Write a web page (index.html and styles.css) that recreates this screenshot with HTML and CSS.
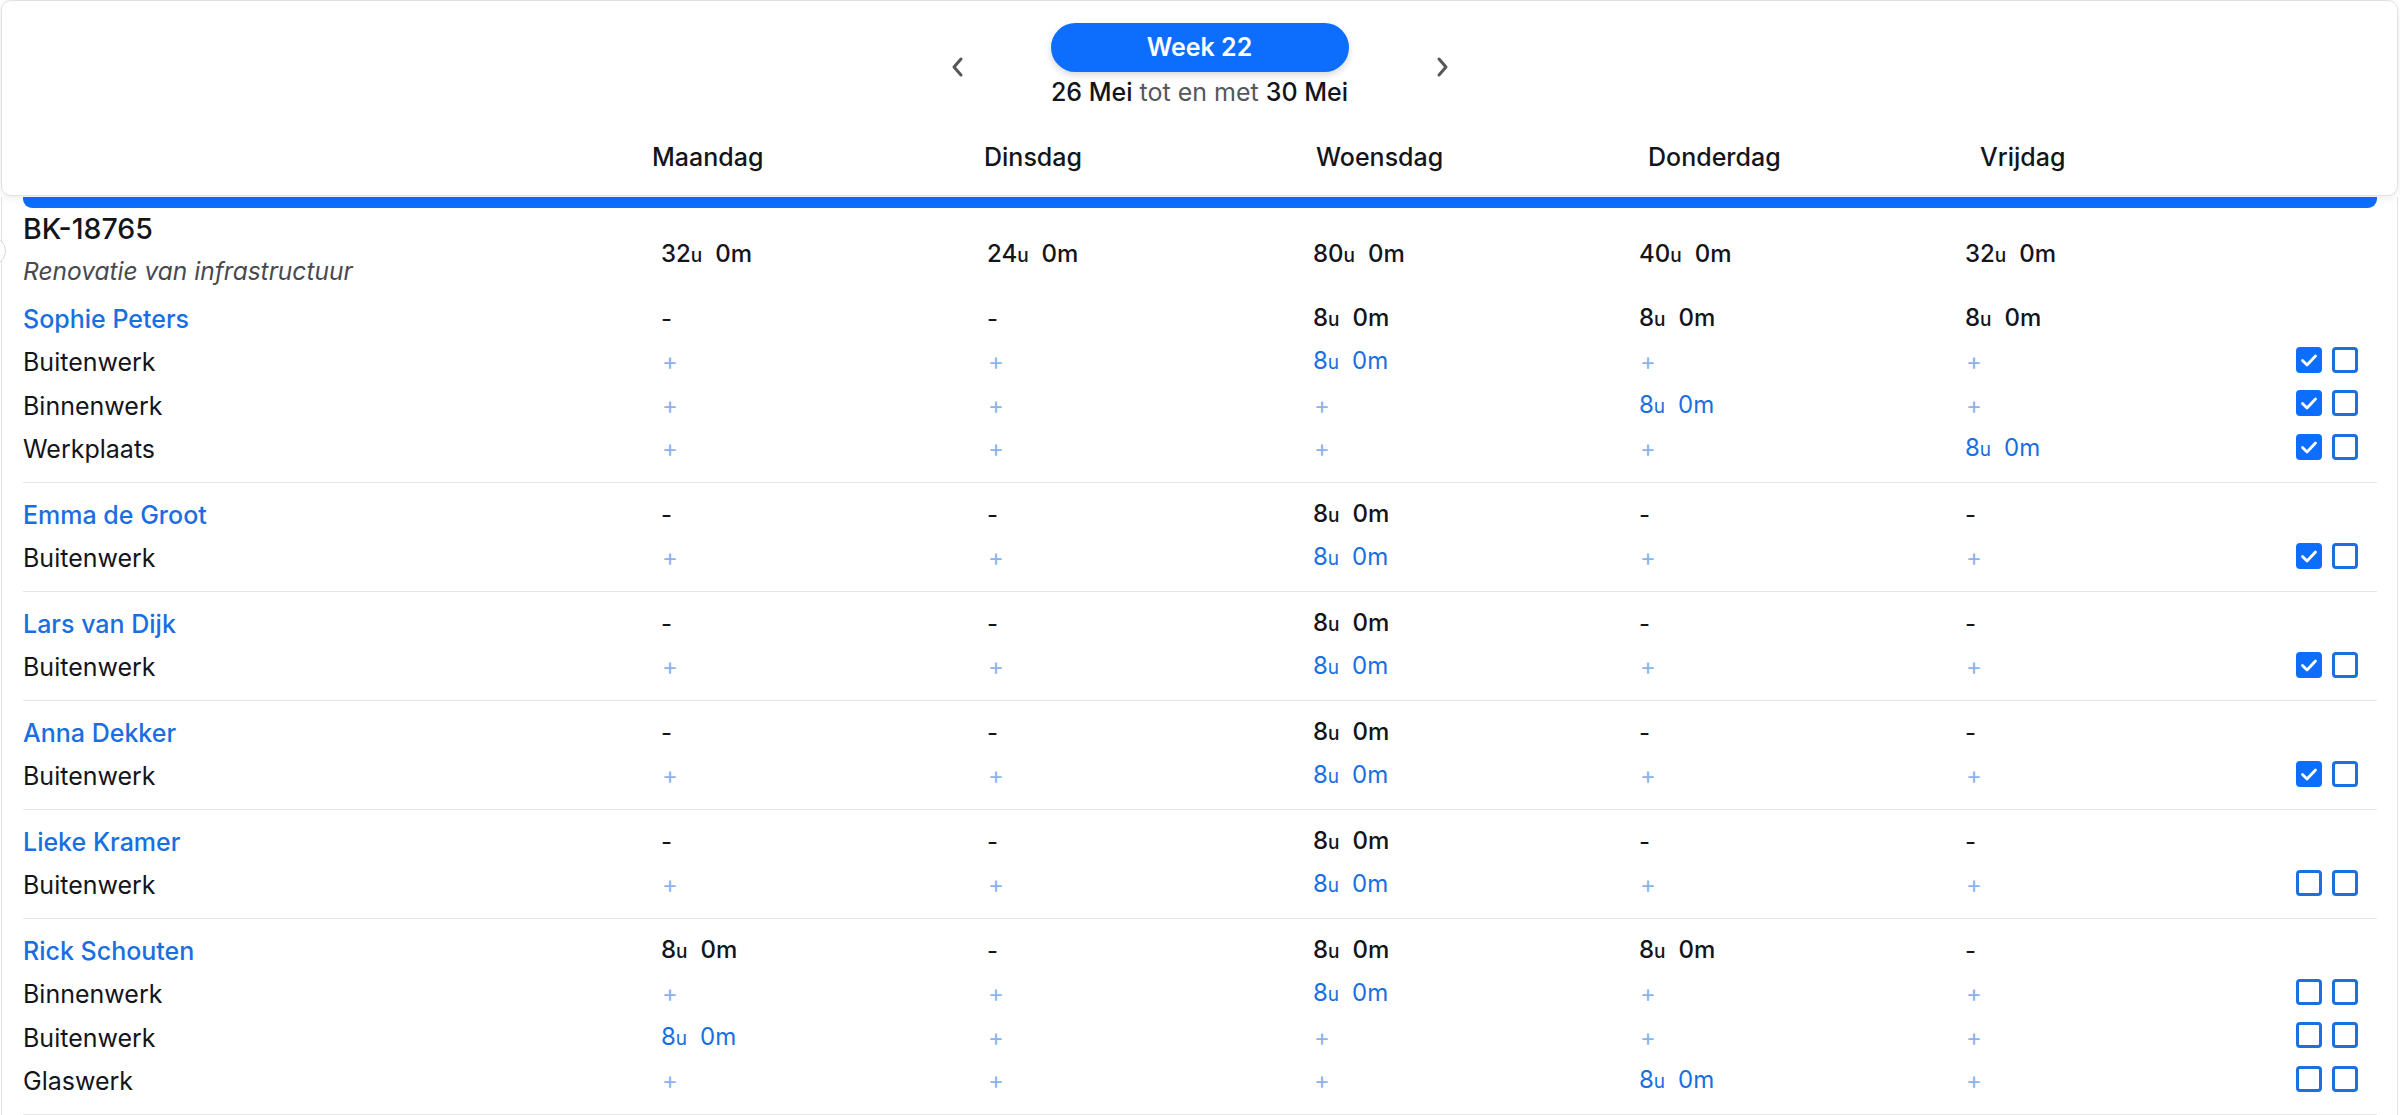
FILE: index.html
```html
<!DOCTYPE html>
<html lang="nl">
<head>
<meta charset="utf-8">
<title>Week 22</title>
<link rel="stylesheet" href="styles.css">
</head>
<body>
<header class="topbar">
  <div class="nav">
    <span class="chev"><svg viewBox="0 0 14 22" width="14" height="22"><path d="M11 3 L4 11 L11 19" /></svg></span>
    <div class="week">
      <div class="pill">Week 22</div>
      <div class="range"><b>26 Mei</b> tot en met <b>30 Mei</b></div>
    </div>
    <span class="chev"><svg viewBox="0 0 14 22" width="14" height="22"><path d="M3 3 L10 11 L3 19" /></svg></span>
  </div>
  <div class="days">
    <span>Maandag</span><span>Dinsdag</span><span>Woensdag</span><span>Donderdag</span><span>Vrijdag</span>
  </div>
</header>

<main class="panel">
  <span class="edge-knob"></span>
  <div class="bar"></div>

  <section class="grid project-head">
    <div class="title-cell">
      <div class="title">BK-18765</div>
      <div class="subtitle">Renovatie van infrastructuur</div>
    </div>
    <div class="val strong"><span class="n">32</span><span class="u">u</span><span class="n gap">0</span><span class="m">m</span></div>
    <div class="val strong"><span class="n">24</span><span class="u">u</span><span class="n gap">0</span><span class="m">m</span></div>
    <div class="val strong"><span class="n">80</span><span class="u">u</span><span class="n gap">0</span><span class="m">m</span></div>
    <div class="val strong"><span class="n">40</span><span class="u">u</span><span class="n gap">0</span><span class="m">m</span></div>
    <div class="val strong"><span class="n">32</span><span class="u">u</span><span class="n gap">0</span><span class="m">m</span></div>
    <div></div>
  </section>

  <!-- Sophie Peters -->
  <section class="group first">
    <div class="grid row">
      <div class="name">Sophie Peters</div>
      <div class="val">-</div><div class="val">-</div>
      <div class="val strong"><span class="n">8</span><span class="u">u</span><span class="n gap">0</span><span class="m">m</span></div>
      <div class="val strong"><span class="n">8</span><span class="u">u</span><span class="n gap">0</span><span class="m">m</span></div>
      <div class="val strong"><span class="n">8</span><span class="u">u</span><span class="n gap">0</span><span class="m">m</span></div>
      <div></div>
    </div>
    <div class="grid row">
      <div class="task">Buitenwerk</div>
      <div class="add">+</div><div class="add">+</div>
      <div class="val blue"><span class="n">8</span><span class="u">u</span><span class="n gap">0</span><span class="m">m</span></div>
      <div class="add">+</div><div class="add">+</div>
      <div class="checks"><span class="cb on"><svg viewBox="0 0 26 26"><path d="M6.5 13.5 L11 18 L19.5 9"/></svg></span><span class="cb"></span></div>
    </div>
    <div class="grid row">
      <div class="task">Binnenwerk</div>
      <div class="add">+</div><div class="add">+</div><div class="add">+</div>
      <div class="val blue"><span class="n">8</span><span class="u">u</span><span class="n gap">0</span><span class="m">m</span></div>
      <div class="add">+</div>
      <div class="checks"><span class="cb on"><svg viewBox="0 0 26 26"><path d="M6.5 13.5 L11 18 L19.5 9"/></svg></span><span class="cb"></span></div>
    </div>
    <div class="grid row">
      <div class="task">Werkplaats</div>
      <div class="add">+</div><div class="add">+</div><div class="add">+</div><div class="add">+</div>
      <div class="val blue"><span class="n">8</span><span class="u">u</span><span class="n gap">0</span><span class="m">m</span></div>
      <div class="checks"><span class="cb on"><svg viewBox="0 0 26 26"><path d="M6.5 13.5 L11 18 L19.5 9"/></svg></span><span class="cb"></span></div>
    </div>
  </section>

  <!-- Emma de Groot -->
  <section class="group">
    <div class="grid row">
      <div class="name">Emma de Groot</div>
      <div class="val">-</div><div class="val">-</div>
      <div class="val strong"><span class="n">8</span><span class="u">u</span><span class="n gap">0</span><span class="m">m</span></div>
      <div class="val">-</div><div class="val">-</div>
      <div></div>
    </div>
    <div class="grid row">
      <div class="task">Buitenwerk</div>
      <div class="add">+</div><div class="add">+</div>
      <div class="val blue"><span class="n">8</span><span class="u">u</span><span class="n gap">0</span><span class="m">m</span></div>
      <div class="add">+</div><div class="add">+</div>
      <div class="checks"><span class="cb on"><svg viewBox="0 0 26 26"><path d="M6.5 13.5 L11 18 L19.5 9"/></svg></span><span class="cb"></span></div>
    </div>
  </section>

  <!-- Lars van Dijk -->
  <section class="group">
    <div class="grid row">
      <div class="name">Lars van Dijk</div>
      <div class="val">-</div><div class="val">-</div>
      <div class="val strong"><span class="n">8</span><span class="u">u</span><span class="n gap">0</span><span class="m">m</span></div>
      <div class="val">-</div><div class="val">-</div>
      <div></div>
    </div>
    <div class="grid row">
      <div class="task">Buitenwerk</div>
      <div class="add">+</div><div class="add">+</div>
      <div class="val blue"><span class="n">8</span><span class="u">u</span><span class="n gap">0</span><span class="m">m</span></div>
      <div class="add">+</div><div class="add">+</div>
      <div class="checks"><span class="cb on"><svg viewBox="0 0 26 26"><path d="M6.5 13.5 L11 18 L19.5 9"/></svg></span><span class="cb"></span></div>
    </div>
  </section>

  <!-- Anna Dekker -->
  <section class="group">
    <div class="grid row">
      <div class="name">Anna Dekker</div>
      <div class="val">-</div><div class="val">-</div>
      <div class="val strong"><span class="n">8</span><span class="u">u</span><span class="n gap">0</span><span class="m">m</span></div>
      <div class="val">-</div><div class="val">-</div>
      <div></div>
    </div>
    <div class="grid row">
      <div class="task">Buitenwerk</div>
      <div class="add">+</div><div class="add">+</div>
      <div class="val blue"><span class="n">8</span><span class="u">u</span><span class="n gap">0</span><span class="m">m</span></div>
      <div class="add">+</div><div class="add">+</div>
      <div class="checks"><span class="cb on"><svg viewBox="0 0 26 26"><path d="M6.5 13.5 L11 18 L19.5 9"/></svg></span><span class="cb"></span></div>
    </div>
  </section>

  <!-- Lieke Kramer -->
  <section class="group">
    <div class="grid row">
      <div class="name">Lieke Kramer</div>
      <div class="val">-</div><div class="val">-</div>
      <div class="val strong"><span class="n">8</span><span class="u">u</span><span class="n gap">0</span><span class="m">m</span></div>
      <div class="val">-</div><div class="val">-</div>
      <div></div>
    </div>
    <div class="grid row">
      <div class="task">Buitenwerk</div>
      <div class="add">+</div><div class="add">+</div>
      <div class="val blue"><span class="n">8</span><span class="u">u</span><span class="n gap">0</span><span class="m">m</span></div>
      <div class="add">+</div><div class="add">+</div>
      <div class="checks"><span class="cb"></span><span class="cb"></span></div>
    </div>
  </section>

  <!-- Rick Schouten -->
  <section class="group">
    <div class="grid row">
      <div class="name">Rick Schouten</div>
      <div class="val strong"><span class="n">8</span><span class="u">u</span><span class="n gap">0</span><span class="m">m</span></div>
      <div class="val">-</div>
      <div class="val strong"><span class="n">8</span><span class="u">u</span><span class="n gap">0</span><span class="m">m</span></div>
      <div class="val strong"><span class="n">8</span><span class="u">u</span><span class="n gap">0</span><span class="m">m</span></div>
      <div class="val">-</div>
      <div></div>
    </div>
    <div class="grid row">
      <div class="task">Binnenwerk</div>
      <div class="add">+</div><div class="add">+</div>
      <div class="val blue"><span class="n">8</span><span class="u">u</span><span class="n gap">0</span><span class="m">m</span></div>
      <div class="add">+</div><div class="add">+</div>
      <div class="checks"><span class="cb"></span><span class="cb"></span></div>
    </div>
    <div class="grid row">
      <div class="task">Buitenwerk</div>
      <div class="val blue"><span class="n">8</span><span class="u">u</span><span class="n gap">0</span><span class="m">m</span></div>
      <div class="add">+</div><div class="add">+</div><div class="add">+</div><div class="add">+</div>
      <div class="checks"><span class="cb"></span><span class="cb"></span></div>
    </div>
    <div class="grid row">
      <div class="task">Glaswerk</div>
      <div class="add">+</div><div class="add">+</div><div class="add">+</div>
      <div class="val blue"><span class="n">8</span><span class="u">u</span><span class="n gap">0</span><span class="m">m</span></div>
      <div class="add">+</div>
      <div class="checks"><span class="cb"></span><span class="cb"></span></div>
    </div>
  </section>
</main>
</body>
</html>
```

FILE: styles.css
```css
* { box-sizing: border-box; }

html, body {
  margin: 0;
  padding: 0;
  background: #ffffff;
}

body {
  font-family: Inter, "Noto Sans", "Liberation Sans", sans-serif;
  font-size: 25px;
  line-height: 30px;
  color: #14151a;
  overflow: hidden;
  height: 1115px;
}

/* ---------- top bar ---------- */
.topbar {
  position: relative;
  z-index: 2;
  margin: 0 2px 0 1px;
  background: #fff;
  border: 1px solid #e1e1e1;
  border-radius: 10px;
  box-shadow: 0 2px 8px rgba(0, 0, 0, 0.08);
  padding: 22px 0 23px;
}

.nav {
  display: flex;
  justify-content: center;
  align-items: center;
  gap: 87px;
}

.chev {
  display: flex;
  width: 14px;
  height: 22px;
  margin-top: 4px;
}
.chev svg path {
  fill: none;
  stroke: #55565b;
  stroke-width: 3;
  stroke-linecap: round;
  stroke-linejoin: round;
}

.week {
  width: 298px;
  display: flex;
  flex-direction: column;
  align-items: center;
}

.pill {
  width: 298px;
  height: 49px;
  border-radius: 25px;
  background: #0d6efd;
  color: #fff;
  font-weight: 600;
  text-align: center;
  line-height: 49px;
  box-shadow: 0 3px 7px rgba(0, 0, 0, 0.16);
}

.range {
  margin-top: 5px;
  color: #55575e;
  white-space: nowrap;
}
.range b {
  font-weight: 500;
  color: #14151a;
}

.days {
  margin-top: 35px;
  padding-left: 650px;
  display: grid;
  grid-template-columns: repeat(5, 332px);
  font-weight: 500;
}

/* ---------- panel ---------- */
.panel {
  position: relative;
  margin: 0 2px 0 1px;
  border-left: 1px solid #e3e3e3;
  border-right: 1px solid #e3e3e3;
  padding: 0 20px 0 21px;
}

.edge-knob {
  position: absolute;
  left: -26px;
  top: 39px;
  width: 30px;
  height: 30px;
  border-radius: 50%;
  border: 1px solid #d6d6d6;
  background: #fff;
}

.bar {
  margin-top: 1px;
  height: 11px;
  background: #0d6efd;
  border-radius: 0 0 9px 9px;
  box-shadow: 0 10px 16px -6px rgba(0, 0, 0, 0.08);
}

.grid {
  display: grid;
  grid-template-columns: 638px repeat(5, 326px) 1fr;
  align-items: center;
}

.title-cell {
  padding: 4px 0 11px;
}
.title {
  font-size: 28.5px;
  line-height: 34px;
  font-weight: 500;
}
.subtitle {
  margin-top: 10px;
  font-size: 24.5px;
  line-height: 30px;
  font-style: italic;
  color: #48494f;
}
.project-head .val {
  padding-top: 5px;
}

.group {
  padding: 10.5px 0;
  border-bottom: 1px solid #e6e6e6;
}
.group.first {
  padding-top: 0;
}

.row {
  height: 43.5px;
}

.name {
  color: #1a6fe0;
  font-weight: 500;
}
.task {
  color: #14151a;
}

.val {
  white-space: nowrap;
  font-size: 24px;
}
.val.strong {
  font-weight: 500;
}
.val.blue {
  color: #1a6fe0;
}
.val .u {
  font-size: 19px;
}
.val .gap {
  margin-left: 13px;
}

.add {
  color: #8db3ec;
  padding-left: 1px;
  font-size: 24px;
}

.checks {
  display: flex;
  justify-content: flex-end;
  gap: 10px;
  padding-right: 19px;
  margin-bottom: 5px;
}

.cb {
  width: 26px;
  height: 26px;
  border: 3px solid #1c6fde;
  border-radius: 4px;
  background: #fff;
  display: block;
}
.cb.on {
  background: #0d6efd;
  border-color: #0d6efd;
  position: relative;
}
.cb.on svg {
  position: absolute;
  left: -3px;
  top: -3px;
  width: 26px;
  height: 26px;
}
.cb.on svg path {
  fill: none;
  stroke: #fff;
  stroke-width: 2.8;
  stroke-linecap: round;
  stroke-linejoin: round;
}
```
